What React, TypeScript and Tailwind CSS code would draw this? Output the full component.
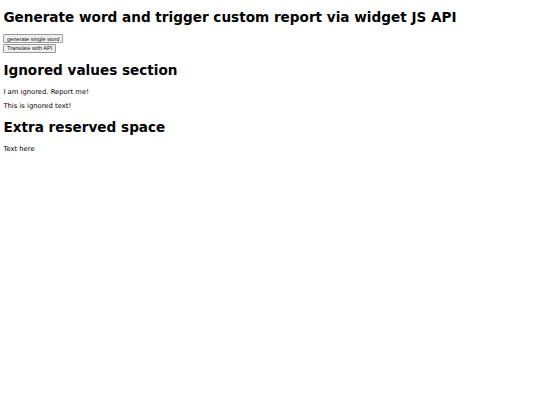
export default function App() {
  const btn =
    "block border-[0.5px] border-[#9a9a9a] bg-[#efefef] rounded-[1px] px-[2.55px] py-[0.4px] font-['Liberation_Sans',Arial,sans-serif] text-[5.67px] leading-[1.15] text-[#222]";
  const heading = "my-[9.1px] text-[13.6px] font-bold";

  return (
    <div className="m-[3.4px] font-['DejaVu_Sans',Verdana,sans-serif] text-[6.8px] leading-[normal] text-black">
      <h1 className={heading}>Generate word and trigger custom report via widget JS API</h1>
      <div className="mt-[1px] flex flex-col items-start gap-[0.6px]">
        <button className={btn}>generate single word</button>
        <button className={btn}>Translate with API</button>
      </div>

      <h1 className={heading}>Ignored values section</h1>
      <p className="my-[6.8px]">I am ignored. Report me!</p>
      <p className="my-[6.8px]">This is ignored text!</p>

      <h1 className={heading}>Extra reserved space</h1>
      <p className="my-[6.8px]">Text here</p>
    </div>
  );
}
